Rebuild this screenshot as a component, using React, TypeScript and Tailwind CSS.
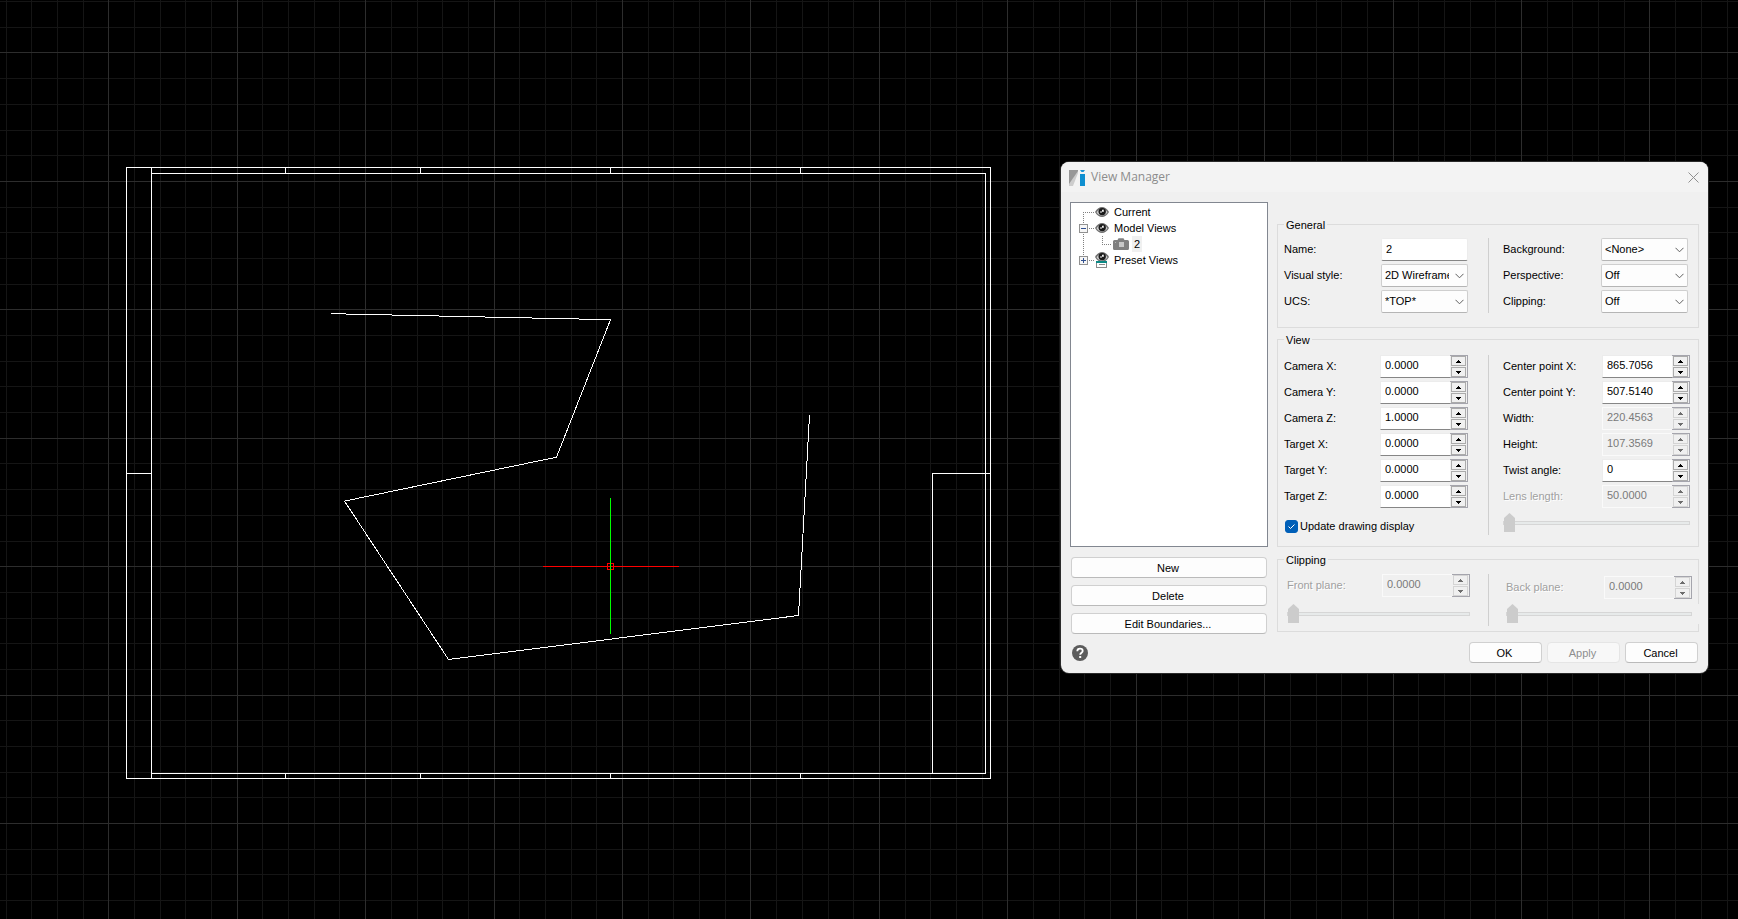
import { useId, useState } from "react";
import type { ReactNode } from "react";

const GRID_STEP = 25.686;
const GRID_X = 108.8;
const GRID_Y = 52.98;

const gridLines = (origin: number, size: number) => {
  const lines: { pos: number; major: boolean }[] = [];
  for (let i = -4; origin + i * GRID_STEP < size; i++) {
    const pos = Math.floor(origin + i * GRID_STEP);
    if (pos >= 0) lines.push({ pos, major: i % 5 === 0 });
  }
  return lines;
};

const columns = gridLines(GRID_X, 3840);
const rows = gridLines(GRID_Y, 2160);

function DrawingCanvas() {
  return (
    <svg
      className="absolute inset-0 h-full w-full"
      shapeRendering="crispEdges"
      aria-hidden="true"
    >
      {[false, true].map((major) => (
        <g key={String(major)} fill={major ? "#2d2d2d" : "#151515"}>
          {columns
            .filter((c) => c.major === major)
            .map((c) => (
              <rect key={`c${c.pos}`} x={c.pos} y="0" width="1" height="100%" />
            ))}
          {rows
            .filter((r) => r.major === major)
            .map((r) => (
              <rect key={`r${r.pos}`} x="0" y={r.pos} width="100%" height="1" />
            ))}
        </g>
      ))}

      <g fill="none" stroke="#fff" transform="translate(0.5 0.5)">
        {/* outer and inner walls */}
        <path d="M126 167H990V778H126Z" />
        <path d="M151 167V778M151 173H985V773H151" />
        <path d="M126 473H151M932 773V473H990" />
        {/* wall joints */}
        <path d="M285 167V173M420 167V173M610 167V173M800 167V173" />
        <path d="M285 773V778M420 773V778M610 773V778M800 773V778" />
        <polyline points="331,313.2 610,319.2 556,456.7 344,500.6 448,659 798,615 809,415" />
      </g>

      {/* crosshair with pick box */}
      <rect x="543" y="566" width="136" height="1" fill="#f00" />
      <rect x="607.5" y="563.5" width="6" height="6" fill="none" stroke="#f00" />
      <rect x="610" y="498" width="1" height="136" fill="#0f0" />
    </svg>
  );
}

function Eye() {
  return (
    <>
      <path d="M0 5C2 1.400 4.500 0 7 0S12 1.400 14 5C12 8.600 9.500 10 7 10S2 8.600 0 5Z" fill="#6e6e6e" />
      <path d="M1.500 5.200C3 3 4.700 2 7 2s4 1 5.500 3.200C11 7.600 9.300 8.400 7 8.400S3 7.600 1.500 5.200Z" fill="#d0d0d0" />
      <circle cx="7.200" cy="4.600" r="3.700" fill="#1b1b1b" />
      <path d="M5 4H7V2.500H9V5H7V6H5Z" fill="#8c8c8c" />
      <rect x="7" y="3" width="1.500" height="1.500" fill="#f4f4f4" />
    </>
  );
}

function EyeIcon() {
  return (
    <svg width="14" height="10" viewBox="0 0 14 10" className="shrink-0" aria-hidden="true">
      <Eye />
    </svg>
  );
}

function PresetIcon() {
  return (
    <svg width="14" height="16" viewBox="0 0 14 16" className="shrink-0" aria-hidden="true">
      <Eye />
      <rect x="1.500" y="9.500" width="10" height="6" fill="#fff" stroke="#8a8a8a" />
      <rect x="1" y="9" width="11" height="2" fill="#0b8a86" />
      <rect x="4" y="12" width="6" height="1" fill="#8a8a8a" />
    </svg>
  );
}

function CameraIcon() {
  return (
    <svg width="16" height="12" viewBox="0 0 16 12" className="shrink-0" aria-hidden="true">
      <path d="M0 3.500Q0 2 1.500 2H4.500L5.500 0.300H10.500L11.500 2H14.500Q16 2 16 3.500V10.500Q16 12 14.500 12H1.500Q0 12 0 10.500Z" fill="#808080" />
      <rect x="6" y="4" width="5" height="5" fill="#c8c8c8" />
      <rect x="2" y="4" width="1" height="1" fill="#b4b4b4" />
    </svg>
  );
}

function Expander({ open }: { open: boolean }) {
  return (
    <g shapeRendering="crispEdges">
      <rect x="8.500" y="4.500" width="8" height="8" fill="#f6f6f6" stroke="#919191" />
      <path d="M10 8.500H15" stroke="#31508f" />
      {!open && <path d="M12.500 6V11" stroke="#31508f" />}
    </g>
  );
}

function Gutter({ width, dots, children }: { width: number; dots: string; children?: ReactNode }) {
  return (
    <svg width={width} height="16" className="mr-px shrink-0" aria-hidden="true">
      <path d={dots} fill="none" stroke="#808080" strokeDasharray="1 1" shapeRendering="crispEdges" />
      {children}
    </svg>
  );
}

function ViewTree() {
  return (
    <ul
      role="tree"
      aria-label="Views"
      className="h-[345px] border border-[#828790] bg-white pt-px"
    >
      <li role="treeitem" className="flex h-4 items-center">
        <Gutter width={23} dots="M12.500 8V16M12 8.500H23" />
        <EyeIcon />
        <span className="ml-[5px]">Current</span>
      </li>
      <li role="treeitem" aria-expanded="true" className="flex h-4 items-center">
        <Gutter width={23} dots="M12.500 0V16M18 8.500H23">
          <Expander open />
        </Gutter>
        <EyeIcon />
        <span className="ml-[5px]">Model Views</span>
      </li>
      <li role="treeitem" aria-selected="true" className="flex h-4 items-center">
        <Gutter width={41} dots="M12.500 0V16M31.500 0V8M31 8.500H41" />
        <CameraIcon />
        <span className="ml-[3px] bg-[#f0f0f0] px-[2px] leading-4">2</span>
      </li>
      <li role="treeitem" aria-expanded="false" className="flex h-4 items-center">
        <Gutter width={23} dots="M12.500 0V8M18 8.500H23">
          <Expander open={false} />
        </Gutter>
        <PresetIcon />
        <span className="ml-[5px]">Preset Views</span>
      </li>
    </ul>
  );
}

function Row({ label, htmlFor, disabled, children }: {
  label: string;
  htmlFor: string;
  disabled?: boolean;
  children: ReactNode;
}) {
  return (
    <div className="flex h-[23px] items-center justify-between">
      <label
        htmlFor={htmlFor}
        className={disabled ? "text-[#a0a0a0] [text-shadow:1px_1px_0_#fff]" : ""}
      >
        {label}
      </label>
      {children}
    </div>
  );
}

function Combo({ label, options }: { label: string; options: string[] }) {
  const id = useId();
  return (
    <Row label={label} htmlFor={id}>
      <div className="relative">
        <select
          id={id}
          className="block h-[23px] w-[87px] appearance-none rounded-[2px] border border-[#cfcfcf] border-b-[#b5b5b5] bg-[#fdfdfd] pr-[18px] pl-[3px]"
        >
          {options.map((o) => (
            <option key={o}>{o}</option>
          ))}
        </select>
        <svg
          width="9"
          height="6"
          className="pointer-events-none absolute top-[9px] right-1"
          aria-hidden="true"
        >
          <path d="M0.500 0.800L4.500 4.800L8.500 0.800" fill="none" stroke="#5f5f5f" />
        </svg>
      </div>
    </Row>
  );
}

type SpinProps = {
  label: string;
  value: string;
  disabled?: boolean;
  // computed values keep a normal label but cannot be edited
  locked?: boolean;
};

function Spin({ label, value, disabled, locked }: SpinProps) {
  const id = useId();
  const [text, setText] = useState(value);
  const off = disabled || locked;
  const decimals = value.includes(".") ? 4 : 0;
  const step = (by: number) => setText((t) => (Number(t) + by).toFixed(decimals));
  const button = off
    ? "flex h-[10px] w-[15px] items-center justify-center border border-[#d4d4d4] text-[#6d6d6d]"
    : "flex h-[10px] w-[15px] items-center justify-center border border-[#ababab] text-black";

  return (
    <Row label={label} htmlFor={id} disabled={disabled}>
      <div className="flex h-[23px] w-[88px]">
        <input
          id={id}
          value={text}
          disabled={off}
          onChange={(e) => setText(e.target.value)}
          className={
            off
              ? "min-w-0 flex-1 border border-r-0 border-[#fafafa] bg-[#f0f0f0] pb-[2px] pl-1 text-[#7a7a7a]"
              : "min-w-0 flex-1 border border-r-0 border-[#ececec] border-b-[#868686] bg-white pb-[2px] pl-1"
          }
        />
        <div className="flex flex-col justify-between border-y border-r border-[#a5a5ad] bg-[#f0f0f0] px-px">
          <button type="button" disabled={off} aria-label={`Increase ${label}`} onClick={() => step(1)} className={button}>
            <svg width="5" height="3" shapeRendering="crispEdges"><path d="M2 0h1v1h1v1h1v1H0V2h1V1h1z" fill="currentColor" /></svg>
          </button>
          <button type="button" disabled={off} aria-label={`Decrease ${label}`} onClick={() => step(-1)} className={button}>
            <svg width="5" height="3" shapeRendering="crispEdges"><path d="M0 0h5v1H4v1H3v1H2V2H1V1H0z" fill="currentColor" /></svg>
          </button>
        </div>
      </div>
    </Row>
  );
}

function Slider({ label }: { label: string }) {
  return (
    <input
      type="range"
      aria-label={label}
      defaultValue={0}
      disabled
      className="block h-5 w-full appearance-none bg-transparent [&::-webkit-slider-runnable-track]:h-1 [&::-webkit-slider-runnable-track]:border [&::-webkit-slider-runnable-track]:border-[#d6d6d6] [&::-webkit-slider-runnable-track]:bg-[#e7eaea] [&::-webkit-slider-thumb]:-mt-[9px] [&::-webkit-slider-thumb]:h-[19px] [&::-webkit-slider-thumb]:w-[11px] [&::-webkit-slider-thumb]:appearance-none [&::-webkit-slider-thumb]:bg-[#cccccc] [&::-webkit-slider-thumb]:[clip-path:polygon(50%_0,100%_26%,100%_100%,0_100%,0_26%)]"
    />
  );
}

function Group({ title, className, children }: { title: string; className: string; children: ReactNode }) {
  return (
    <fieldset className={`min-w-0 border border-[#dcdcdc] pl-[6px] ${className}`}>
      <legend className="px-[2px] pt-px leading-[14px]">{title}</legend>
      {children}
    </fieldset>
  );
}

const pushButton =
  "h-[21px] rounded-[4px] border border-[#d0d0d0] border-b-[#bababa] bg-[#fdfdfd] pr-[2px] text-center leading-[18px] disabled:border-[#e5e5e5] disabled:bg-[#f8f8f8] disabled:text-[#8e8e8e]";

function ViewManager() {
  return (
    <form
      role="dialog"
      aria-label="View Manager"
      onSubmit={(e) => e.preventDefault()}
      className="absolute top-[162px] left-[1061px] w-[647px] overflow-hidden rounded-[8px] bg-[#f0f0f0] font-['Liberation_Sans',Arial,sans-serif] text-[11px] leading-[13px] text-black shadow-[0_0_0_1px_#2a2a2a]"
    >
      <header className="flex h-[30px] items-center bg-[#f3f3f3] pr-[7px] pl-2">
        <svg width="17" height="17" viewBox="0 0 17 17" aria-hidden="true">
          <path d="M0 1H9V4L4 17H0Z" fill="#cdcdcd" />
          <path d="M0 1H9V2L0 15Z" fill="#979797" />
          <path d="M11 1H16L14.500 3H12.500Z" fill="#1c94d2" />
          <rect x="11" y="5" width="5" height="12" fill="#0f8fd0" />
        </svg>
        <h1 className="ml-[5px] font-['Open_Sans','Segoe_UI',sans-serif] text-[12px] leading-4 text-[#8c8c8c]">
          View Manager
        </h1>
        <button type="button" aria-label="Close" className="ml-auto p-[2px]">
          <svg width="11" height="11" aria-hidden="true">
            <path d="M0.500 0.500L10.500 10.500M10.500 0.500L0.500 10.500" stroke="#8f8f8f" fill="none" />
          </svg>
        </button>
      </header>

      <div className="flex gap-[9px] px-[9px] pt-[10px]">
        <div className="w-[198px] shrink-0">
          <ViewTree />
          <div className="mt-[10px] flex flex-col gap-[7px] px-px">
            <button type="button" className={pushButton}>New</button>
            <button type="button" className={pushButton}>Delete</button>
            <button type="button" className={pushButton}>Edit Boundaries...</button>
          </div>
        </div>

        <div className="min-w-0 flex-1 pt-[15px]">
          <Group title="General" className="pr-[10px] pb-[14px]">
            <div className="grid grid-cols-[204px_1px_1fr] pt-[6px]">
              <div className="flex flex-col gap-[3px] pr-5">
                <Row label="Name:" htmlFor="view-name">
                  <input
                    id="view-name"
                    defaultValue="2"
                    className="h-[23px] w-[87px] rounded-[2px] border border-[#ececec] border-b-[#868686] bg-white pb-[2px] pl-1"
                  />
                </Row>
                <Combo label="Visual style:" options={["2D Wireframe", "Hidden", "Shaded"]} />
                <Combo label="UCS:" options={["*TOP*", "World"]} />
              </div>
              <div className="bg-[#cfcfcf]" />
              <div className="flex flex-col gap-[3px] pl-[14px]">
                <Combo label="Background:" options={["<None>", "Solid", "Gradient"]} />
                <Combo label="Perspective:" options={["Off", "On"]} />
                <Combo label="Clipping:" options={["Off", "Front on", "Back on"]} />
              </div>
            </div>
          </Group>

          <Group title="View" className="mt-1 pr-2 pb-[11px]">
            <div className="grid grid-cols-[204px_1px_1fr] pt-2">
              <div className="flex flex-col gap-[3px] pr-5">
                <Spin label="Camera X:" value="0.0000" />
                <Spin label="Camera Y:" value="0.0000" />
                <Spin label="Camera Z:" value="1.0000" />
                <Spin label="Target X:" value="0.0000" />
                <Spin label="Target Y:" value="0.0000" />
                <Spin label="Target Z:" value="0.0000" />
                <label className="mt-[9px] flex items-center gap-[2px] pl-px">
                  <span className="relative block size-[13px]">
                    <input
                      type="checkbox"
                      defaultChecked
                      className="peer block size-[13px] appearance-none rounded-[3px] border border-[#868686] bg-white checked:border-[#005fb8] checked:bg-[#005fb8]"
                    />
                    <svg
                      width="13"
                      height="13"
                      className="pointer-events-none absolute inset-0 hidden peer-checked:block"
                      aria-hidden="true"
                    >
                      <path d="M3.500 6.500L5.500 8.500L9.500 4.500" fill="none" stroke="#fff" />
                    </svg>
                  </span>
                  Update drawing display
                </label>
              </div>
              <div className="bg-[#cfcfcf]" />
              <div className="flex flex-col gap-[3px] pl-[14px]">
                <Spin label="Center point X:" value="865.7056" />
                <Spin label="Center point Y:" value="507.5140" />
                <Spin label="Width:" value="220.4563" locked />
                <Spin label="Height:" value="107.3569" locked />
                <Spin label="Twist angle:" value="0" />
                <Spin label="Lens length:" value="50.0000" disabled />
                <div className="py-[2px]">
                  <Slider label="Lens length" />
                </div>
              </div>
            </div>
          </Group>

          <Group title="Clipping" className="mt-[5px] pr-[6px] pb-[5px]">
            <div className="grid grid-cols-[204px_1px_1fr] pt-[7px]">
              <div className="flex flex-col gap-[7px] pr-[18px] pb-[2px] pl-[3px]">
                <Spin label="Front plane:" value="0.0000" disabled />
                <Slider label="Front plane" />
              </div>
              <div className="bg-[#cfcfcf]" />
              <div className="flex flex-col gap-[5px] pt-[2px] pl-[17px]">
                <Spin label="Back plane:" value="0.0000" disabled />
                <div className="-mr-2 bg-[#f0f0f0] pr-2">
                  <Slider label="Back plane" />
                </div>
              </div>
            </div>
          </Group>
        </div>
      </div>

      <footer className="flex items-center justify-between pt-2 pr-[10px] pb-[10px] pl-[11px]">
        <button type="button" aria-label="Help">
          <svg width="16" height="16" viewBox="0 0 16 16" aria-hidden="true">
            <circle cx="8" cy="8" r="8" fill="#5c5c5c" />
            <path d="M5.300 6.200C5.300 4.500 6.400 3.700 8 3.700s2.700.9 2.700 2.300C10.700 7.700 8.200 7.800 8.200 9.700" fill="none" stroke="#fff" strokeWidth="1.800" />
            <rect x="7.200" y="11" width="2" height="2" fill="#fff" />
          </svg>
        </button>
        <div className="flex gap-[5px]">
          <button type="submit" className={`w-[73px] ${pushButton}`}>OK</button>
          <button type="button" disabled className={`w-[73px] ${pushButton}`}>Apply</button>
          <button type="button" className={`w-[73px] ${pushButton}`}>Cancel</button>
        </div>
      </footer>
    </form>
  );
}

export default function App() {
  return (
    <main className="relative min-h-screen overflow-hidden bg-black">
      <DrawingCanvas />
      <ViewManager />
    </main>
  );
}
